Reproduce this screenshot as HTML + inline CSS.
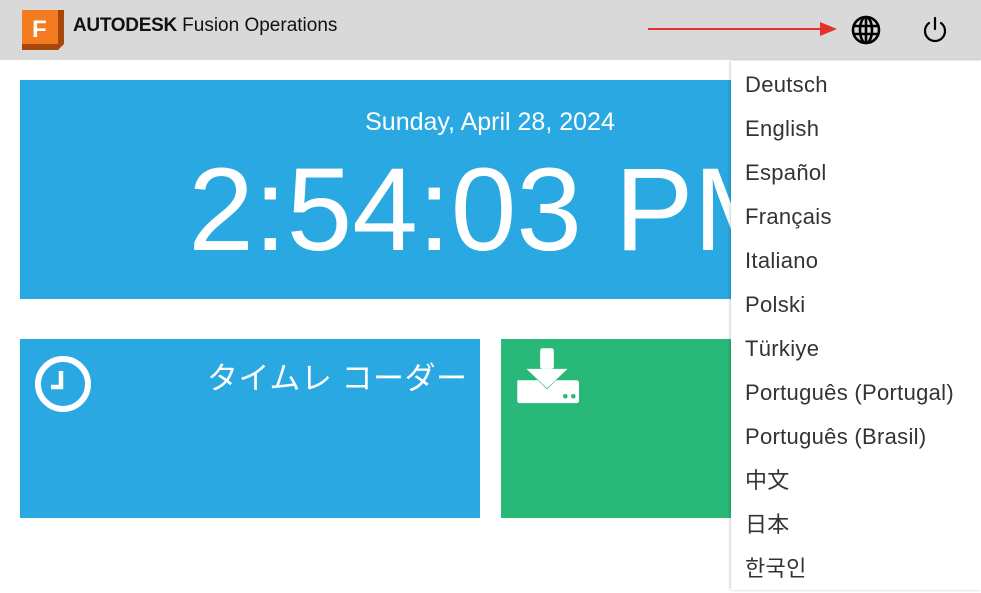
<!DOCTYPE html>
<html><head><meta charset="utf-8"><style>
body{margin:0;width:981px;height:590px;overflow:hidden;background:#fff;font-family:"Liberation Sans","Noto Sans CJK JP",sans-serif;position:relative}
.hdr{position:absolute;left:0;top:0;width:981px;height:60px;background:#d9d9d9}
.big{position:absolute;left:20px;top:80px;width:940px;height:219px;background:#29a8e2;color:#fff;text-align:center}
.date{position:absolute;top:28px;width:100%;font-size:25px}
.time{position:absolute;top:65px;width:100%;font-size:118px;line-height:130px}
.t1{position:absolute;left:20px;top:339px;width:460px;height:179px;background:#29a8e2}
.t2{position:absolute;left:501px;top:339px;width:459px;height:179px;background:#28b877}
.dd{position:absolute;left:731px;top:61px;width:250px;height:529px;background:#fff;box-shadow:-1px 0 3px rgba(0,0,0,.2)}
.dd div{height:44px;line-height:48px;padding-left:14px;font-size:22px;letter-spacing:0.3px;color:#333;font-family:"Liberation Sans","Noto Sans CJK KR",sans-serif}
</style></head><body>
<div class="hdr">
<svg style="position:absolute;left:19px;top:10px" width="46" height="41"><path d="M3 4 L9 0 H45 V34 L39 40 H3 Z" fill="#a8470a"/><rect x="3" y="0" width="36" height="34" fill="#f47b20"/><text x="13" y="27" font-family="Liberation Sans" font-weight="bold" font-size="24" fill="#fff">F</text></svg>
<div style="position:absolute;left:73px;top:15px;font-size:19px;color:#111"><b style="letter-spacing:-0.3px">AUTODESK</b> Fusion Operations</div>
<svg style="position:absolute;left:648px;top:20px" width="190" height="16"><line x1="0" y1="9" x2="176" y2="9" stroke="#e8302a" stroke-width="2"/><path d="M172 2 L189 9 L172 16Z" fill="#e8302a"/></svg>
<svg style="position:absolute;left:850px;top:14px" width="32" height="32" viewBox="0 0 32 32" fill="none" stroke="#000" stroke-width="2.6"><circle cx="16" cy="16" r="13"/><ellipse cx="16" cy="16" rx="6" ry="13"/><line x1="3" y1="12" x2="29" y2="12"/><line x1="3" y1="20" x2="29" y2="20"/><line x1="16" y1="3" x2="16" y2="29"/></svg>
<svg style="position:absolute;left:922px;top:16px" width="26" height="28" viewBox="0 0 26 28" fill="none" stroke="#000" stroke-width="2.2" stroke-linecap="round"><line x1="13" y1="2" x2="13" y2="13"/><path d="M7 7 A10 10 0 1 0 19 7"/></svg>
</div>
<div class="big"><div class="date">Sunday, April 28, 2024</div><div class="time">2:54:03 PM</div></div>
<div class="t1">
<svg style="position:absolute;left:14px;top:16px" width="58" height="58"><circle cx="29" cy="29" r="25" fill="none" stroke="#fff" stroke-width="6"/><path d="M27 16 V32 H17" fill="none" stroke="#fff" stroke-width="4.5"/></svg>
<div style="position:absolute;left:187px;top:14px;color:#fff;font-size:31px;letter-spacing:0.5px">タイムレ コーダー</div>
</div>
<div class="t2">
<svg style="position:absolute;left:14px;top:9px" width="64" height="60" viewBox="0 0 56 52"><rect x="22" y="0" width="12" height="18" rx="2" fill="#fff"/><path d="M10 18 H46 L28 35Z" fill="#fff"/><path d="M2 28 H20 L28 36 L36 28 H54 A2 2 0 0 1 56 30 V46 A2 2 0 0 1 54 48 H4 A2 2 0 0 1 2 46 V30Z" fill="#fff"/><circle cx="44" cy="42" r="2" fill="#28b877"/><circle cx="51" cy="42" r="2" fill="#28b877"/></svg>
</div>
<div class="dd">
<div>Deutsch</div><div>English</div><div>Español</div><div>Français</div><div>Italiano</div><div>Polski</div><div>Türkiye</div><div>Português (Portugal)</div><div>Português (Brasil)</div><div>中文</div><div>日本</div><div>한국인</div>
</div>
</body></html>
